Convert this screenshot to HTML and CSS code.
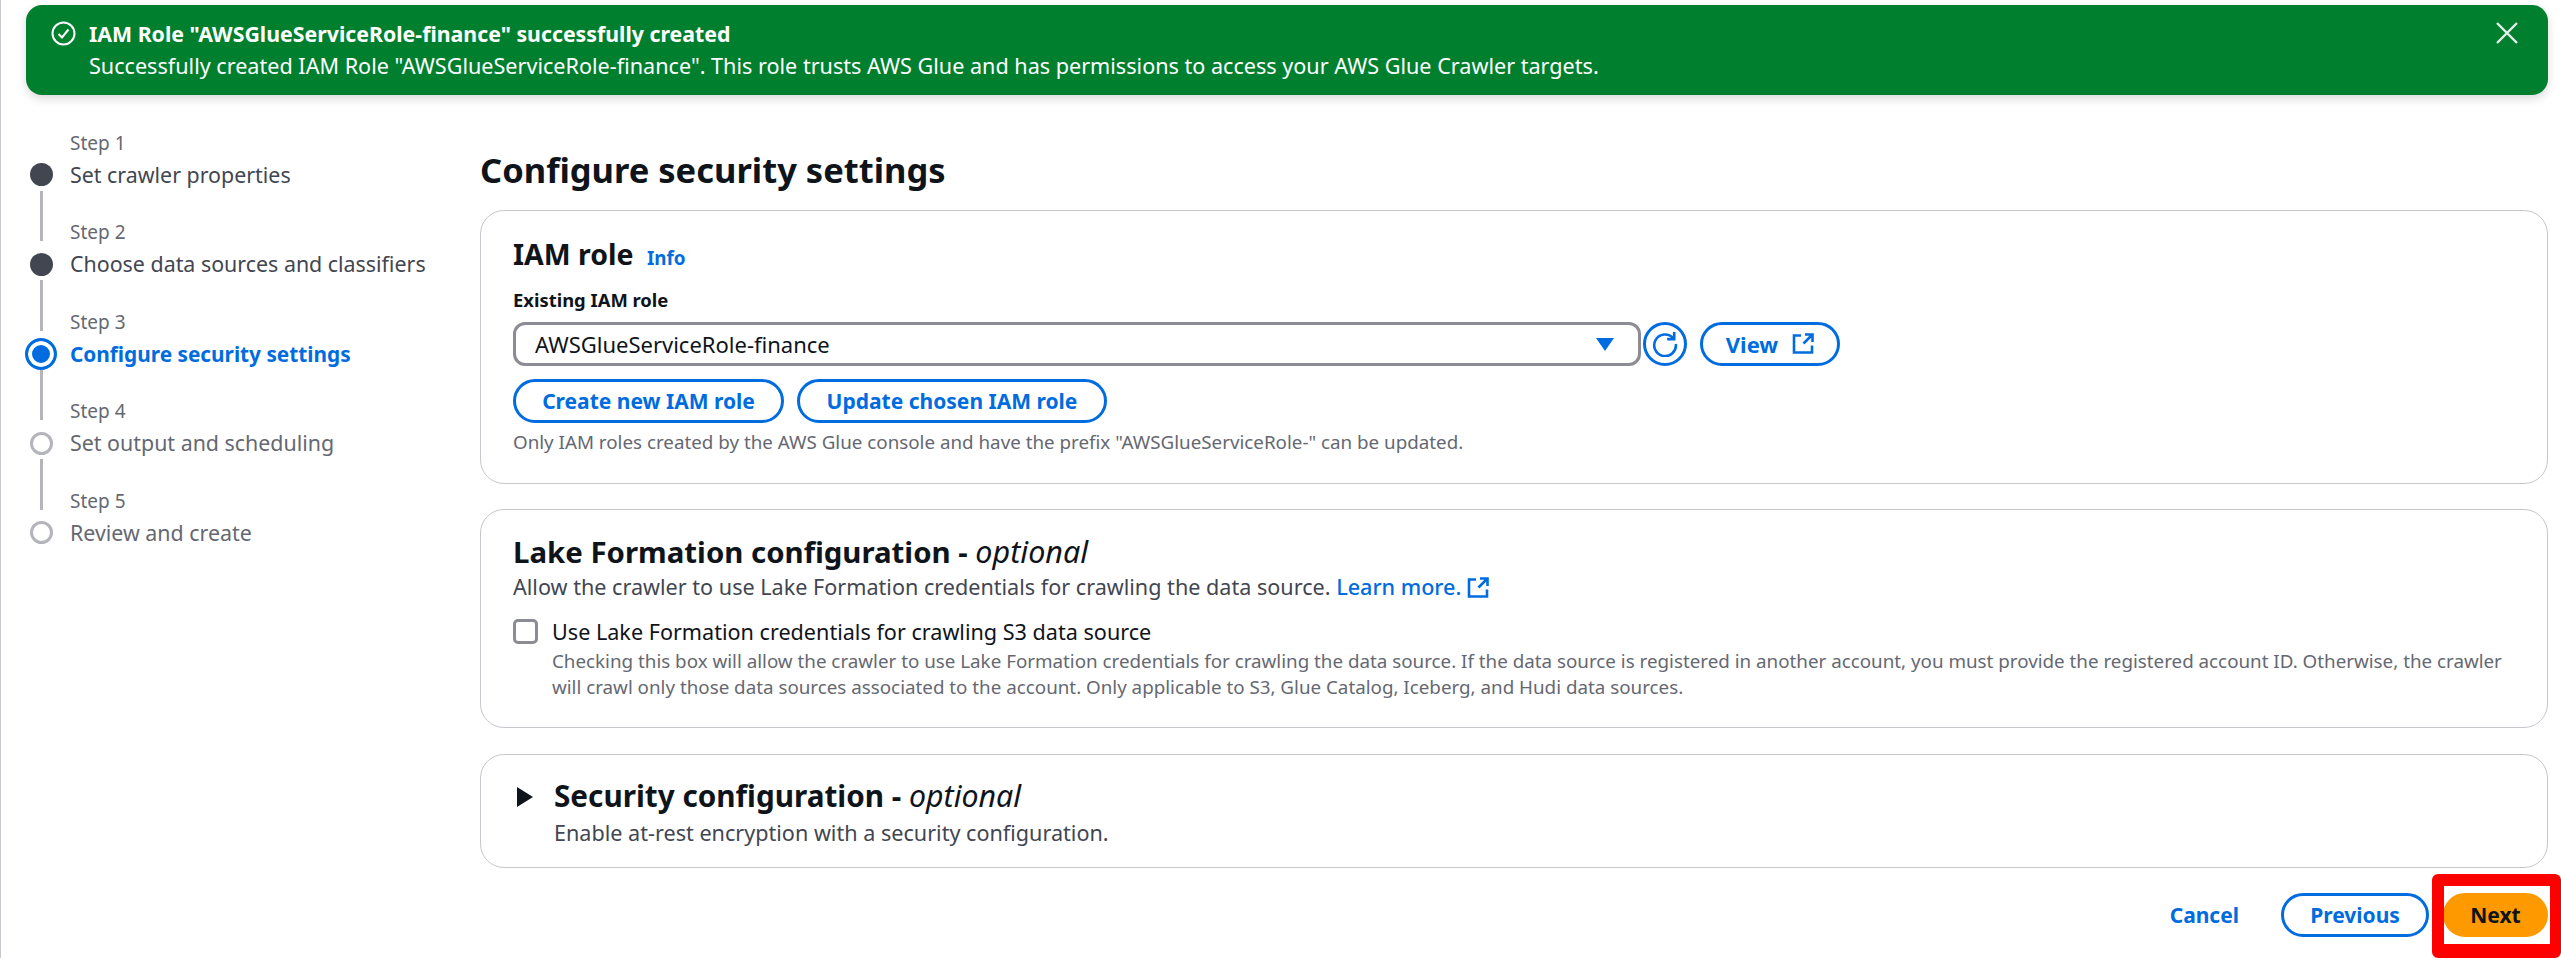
FILE: index.html
```html
<!DOCTYPE html>
<html lang="en">
<head>
    <meta charset="UTF-8">
    <meta name="viewport" content="width=device-width, initial-scale=1.0">
    <title>Configure security settings</title>
    <link rel="stylesheet" href="styles.css">
</head>
<body>
    <div class="page">
        <div class="flash">
            <svg class="flash-icon" viewBox="0 0 25 25" fill="none" stroke="#fff" stroke-width="2">
                <circle cx="12.5" cy="12.5" r="11"/>
                <path d="M7.5 13l3.5 3.5 6.5-8"/>
            </svg>
            <div class="flash-text">
                <div class="flash-title">IAM Role "AWSGlueServiceRole-finance" successfully created</div>
                <div>Successfully created IAM Role "AWSGlueServiceRole-finance". This role trusts AWS Glue and has permissions to access your AWS Glue Crawler targets.</div>
            </div>
            <svg class="flash-close" viewBox="0 0 22 22" fill="none" stroke="#e8eee9" stroke-width="2.4">
                <path d="M1 1l20 20M21 1L1 21"/>
            </svg>
        </div>

        <div class="layout">
            <ol class="steps">
                <li class="step first">
                    <span class="step-line"></span>
                    <span class="step-label">Step 1</span>
                    <span class="step-mark"><span class="dot done"></span></span>
                    <span class="step-title done-title">Set crawler properties</span>
                </li>
                <li class="step">
                    <span class="step-line"></span>
                    <span class="step-label">Step 2</span>
                    <span class="step-mark"><span class="dot done"></span></span>
                    <span class="step-title done-title">Choose data sources and classifiers</span>
                </li>
                <li class="step">
                    <span class="step-line"></span>
                    <span class="step-label">Step 3</span>
                    <span class="step-mark"><span class="dot current"></span></span>
                    <span class="step-title current-title">Configure security settings</span>
                </li>
                <li class="step">
                    <span class="step-line"></span>
                    <span class="step-label">Step 4</span>
                    <span class="step-mark"><span class="dot todo"></span></span>
                    <span class="step-title">Set output and scheduling</span>
                </li>
                <li class="step">
                    <span class="step-line"></span>
                    <span class="step-label">Step 5</span>
                    <span class="step-mark"><span class="dot todo"></span></span>
                    <span class="step-title">Review and create</span>
                </li>
            </ol>

            <main class="content">
                <h1>Configure security settings</h1>

                <section class="card card-role">
                    <h2>IAM role <a class="info" href="#">Info</a></h2>
                    <div class="field-label">Existing IAM role</div>
                    <div class="role-row">
                        <div class="select">
                            <span>AWSGlueServiceRole-finance</span>
                            <span class="select-arrow"></span>
                        </div>
                        <button class="btn btn-icon" type="button">
                            <svg viewBox="0 0 24 24" width="26" height="26" fill="none" stroke="#006ce0" stroke-width="2.4">
                                <path d="M19.5 6.5A10 10 0 1 0 22 12"/>
                                <path d="M20.5 1v6.5H14"/>
                            </svg>
                        </button>
                        <button class="btn btn-view" type="button">View
                            <svg class="external" viewBox="0 0 22 22" fill="none" stroke="#006ce0" stroke-width="2.6">
                                <path d="M9 2.5H2v17h18v-7M13 1.5h7.5V9M20 2l-8.5 8.5"/>
                            </svg>
                        </button>
                    </div>
                    <div class="role-actions">
                        <button class="btn btn-create" type="button">Create new IAM role</button>
                        <button class="btn btn-update" type="button">Update chosen IAM role</button>
                    </div>
                    <p class="hint">Only IAM roles created by the AWS Glue console and have the prefix "AWSGlueServiceRole-" can be updated.</p>
                </section>

                <section class="card card-lake">
                    <h2>Lake Formation configuration - <em>optional</em></h2>
                    <p class="desc">Allow the crawler to use Lake Formation credentials for crawling the data source. <a class="learn" href="#">Learn more.
                        <svg class="external" viewBox="0 0 22 22" fill="none" stroke="#006ce0" stroke-width="2.6">
                            <path d="M9 2.5H2v17h18v-7M13 1.5h7.5V9M20 2l-8.5 8.5"/>
                        </svg></a></p>
                    <div class="check-row">
                        <span class="checkbox"></span>
                        <div>
                            <div class="check-label">Use Lake Formation credentials for crawling S3 data source</div>
                            <p class="check-help">Checking this box will allow the crawler to use Lake Formation credentials for crawling the data source. If the data source is registered in another account, you must provide the registered account ID. Otherwise, the crawler will crawl only those data sources associated to the account. Only applicable to S3, Glue Catalog, Iceberg, and Hudi data sources.</p>
                        </div>
                    </div>
                </section>

                <section class="card card-security">
                    <span class="caret"></span>
                    <div>
                        <h2>Security configuration - <em>optional</em></h2>
                        <p class="desc">Enable at-rest encryption with a security configuration.</p>
                    </div>
                </section>

                <div class="footer">
                    <a class="cancel" href="#">Cancel</a>
                    <button class="btn btn-previous" type="button">Previous</button>
                    <button class="btn btn-next" type="button">Next</button>
                </div>
            </main>
        </div>

        <!-- red highlight drawn over the Next button -->
        <div class="highlight"></div>
    </div>
</body>
</html>
```

FILE: styles.css
```css
* {
    box-sizing: border-box;
}
html, body {
    margin: 0;
    padding: 0;
    background: #fff;
}
body {
    font-family: "Noto Sans", Arial, sans-serif;
    color: #0f141a;
}
.page {
    position: relative;
    width: 2561px;
    height: 958px;
    overflow: hidden;
    padding: 5px 13px 0 25px;
    border-left: 1px solid #c6c6cd;
}

/* flash bar */
.flash {
    display: flex;
    height: 90px;
    padding: 15px 30px 0 25px;
    background: #00802f;
    color: #fff;
    border-radius: 16px;
    box-shadow: 0 4px 10px rgba(0, 7, 22, 0.14);
    font-size: 21.6px;
    line-height: 28px;
}
.flash-icon {
    flex: none;
    width: 25px;
    height: 25px;
    margin: 1px 13px 0 0;
}
.flash-text {
    flex: 1;
}
.flash-title {
    height: 32px;
    font-size: 21.3px;
    font-weight: 700;
}
.flash-close {
    flex: none;
    width: 22px;
    height: 22px;
    margin-top: 2px;
}

/* wizard steps */
.layout {
    display: flex;
    margin-left: -25px;
    padding-top: 6px;
}
.steps {
    flex: none;
    width: 479px;
    margin: 0;
    padding: 0 0 0 10px;
    list-style: none;
}
.step {
    display: grid;
    grid-template-columns: 60px 1fr;
    grid-template-rows: 57.5px 32px;
}
.step-line {
    justify-self: center;
    width: 3px;
    margin: 0 0 7px;
    background: #b4b4bb;
}
.first .step-line {
    visibility: hidden;
}
.step-label {
    align-self: end;
    margin-left: -1px;
    padding-bottom: 4px;
    font-size: 19px;
    line-height: 24px;
    color: #656871;
}
.step-mark {
    display: flex;
    align-items: center;
    justify-content: center;
}
.step-title {
    margin-left: -1px;
    font-size: 21.4px;
    line-height: 32px;
    white-space: nowrap;
    color: #656871;
}
.done-title {
    color: #424650;
}
.current-title {
    font-size: 20.8px;
    color: #006ce0;
    font-weight: 700;
}
.dot {
    display: block;
    border-radius: 50%;
}
.dot.done {
    width: 23px;
    height: 23px;
    background: #424650;
}
.dot.current {
    width: 32px;
    height: 32px;
    border: 3px solid #006ce0;
    background: #006ce0;
    box-shadow: inset 0 0 0 4px #fff;
}
.dot.todo {
    width: 23px;
    height: 23px;
    border: 3px solid #b4b4bb;
    background: #fff;
}

/* main column */
.content {
    flex: 1;
    padding-top: 47px;
}
h1 {
    margin: 0 0 18px;
    font-size: 34.5px;
    line-height: 44px;
    font-weight: 700;
}
.card {
    border: 1px solid #c6c6cd;
    border-radius: 24px;
    padding: 25px 32px 0;
    margin-bottom: 25px;
}
h2 {
    height: 36px;
    margin: 0;
    font-size: 29.4px;
    line-height: 36px;
    font-weight: 700;
}
h2 em {
    font-size: 30.5px;
    font-weight: 400;
}
.card-role h2 {
    font-size: 28.5px;
}
.info {
    margin-left: 6px;
    font-size: 18.8px;
    font-weight: 700;
    color: #006ce0;
    text-decoration: none;
}
.card-role {
    height: 274px;
}
.field-label {
    margin-top: 15px;
    font-size: 18.4px;
    line-height: 26px;
    font-weight: 700;
}
.role-row {
    display: flex;
    margin-top: 9px;
}
.select {
    display: flex;
    align-items: center;
    justify-content: space-between;
    width: 1128px;
    height: 44px;
    padding: 0 24px 0 19px;
    border: 3px solid #8c8c94;
    border-radius: 12px;
    font-size: 22px;
}
.select-arrow {
    width: 0;
    height: 0;
    border-left: 9px solid transparent;
    border-right: 9px solid transparent;
    border-top: 13px solid #006ce0;
}
.btn {
    height: 44px;
    padding: 0;
    border: 3px solid #006ce0;
    border-radius: 22px;
    background: #fff;
    color: #006ce0;
    font-family: inherit;
    font-size: 21px;
    font-weight: 700;
}
.btn-icon {
    display: flex;
    align-items: center;
    justify-content: center;
    width: 44px;
    margin-left: 2px;
}
.btn-view {
    display: flex;
    align-items: center;
    justify-content: center;
    width: 140px;
    margin-left: 13px;
    font-size: 22px;
}
.external {
    width: 22px;
    height: 22px;
    margin-left: 14px;
    vertical-align: -4px;
}
.role-actions {
    display: flex;
    gap: 13px;
    margin-top: 13px;
}
.btn-create {
    width: 271px;
}
.btn-update {
    width: 310px;
}
.hint {
    margin: 7px 0 0;
    font-size: 18.8px;
    line-height: 24px;
    color: #656871;
}
.card-lake {
    height: 219px;
    margin-bottom: 26px;
    padding-top: 23px;
}
.desc {
    height: 26px;
    margin: 5px 0 0;
    font-size: 21.6px;
    line-height: 26px;
    color: #424650;
}
.learn {
    color: #006ce0;
    text-decoration: none;
    font-weight: 500;
}
.learn .external {
    margin-left: 0;
}
.check-row {
    display: flex;
    gap: 14px;
    margin-top: 19px;
}
.checkbox {
    flex: none;
    width: 25px;
    height: 25px;
    border: 3px solid #8c8c94;
    border-radius: 5px;
}
.check-label {
    font-size: 21.6px;
    line-height: 26px;
}
.check-help {
    margin: 3px 0 0;
    font-size: 18.8px;
    line-height: 26px;
    color: #656871;
}
.card-security {
    display: flex;
    height: 114px;
    padding-top: 23px;
    padding-left: 36px;
}
.caret {
    flex: none;
    width: 0;
    height: 0;
    margin: 9px 21px 0 0;
    border-top: 10px solid transparent;
    border-bottom: 10px solid transparent;
    border-left: 16px solid #0f141a;
}
.card-security h2 {
    font-size: 29.7px;
}
.card-security h2 em {
    font-size: 30.3px;
}
.card-security .desc {
    margin-top: 6px;
}

/* footer buttons */
.footer {
    display: flex;
    align-items: center;
    justify-content: flex-end;
}
.cancel {
    margin-right: 42px;
    font-size: 21px;
    font-weight: 700;
    color: #006ce0;
    text-decoration: none;
}
.btn-previous {
    width: 148px;
}
.btn-next {
    width: 105px;
    margin-left: 14px;
    background: #ff9900;
    border-color: #ff9900;
    color: #0f141a;
}
.highlight {
    position: absolute;
    left: 2431px;
    top: 874px;
    width: 129px;
    height: 84px;
    border: solid #ff0000;
    border-width: 12px 11px 14px 12px;
    border-radius: 6px;
}
```
